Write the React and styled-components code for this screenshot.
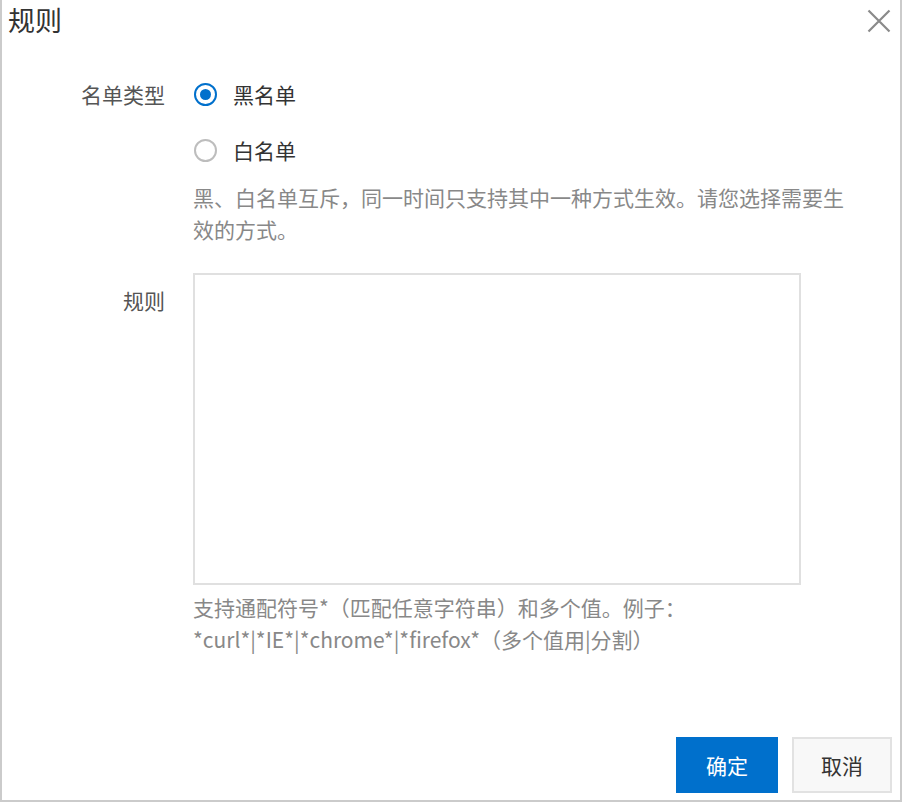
import React, { useState } from "react";
import styled, { createGlobalStyle } from "styled-components";

const Global = createGlobalStyle`
  html, body { margin: 0; padding: 0; background: #fff; }
  body { font-family: "Noto Sans CJK SC", "Noto Sans", sans-serif; }
  * { box-sizing: border-box; }
`;

const Dialog = styled.div`
  width: 902px;
  height: 802px;
  border: 2px solid #cbcbcb;
  border-top: none;
  background: #fff;
  display: flex;
  flex-direction: column;
`;

const Header = styled.div`
  height: 40px;
  display: flex;
  align-items: center;
  justify-content: space-between;
  padding: 0 9px 0 6px;
`;

const Title = styled.div`
  font-size: 27px;
  line-height: 40px;
  color: #333;
`;

const CloseButton = styled.button`
  border: none;
  background: none;
  padding: 0;
  width: 24px;
  height: 24px;
  display: flex;
  cursor: pointer;
  margin-top: 2px;
`;

const Body = styled.div`
  padding-top: 38px;
  display: grid;
  grid-template-columns: 163px 1fr;
  column-gap: 28px;
  row-gap: 28px;
`;

const Label = styled.div`
  text-align: right;
  font-size: 21px;
  line-height: 32px;
  color: #555;
  padding-top: ${(p) => p.$offset || 0}px;
`;

const Field = styled.div`
  display: flex;
  flex-direction: column;
`;

const RadioGroup = styled.div`
  display: flex;
  flex-direction: column;
  gap: 24px;
`;

const RadioItem = styled.label`
  display: flex;
  align-items: center;
  gap: 16px;
  height: 32px;
  font-size: 21px;
  line-height: 32px;
  color: #333;
  cursor: pointer;
`;

const Circle = styled.span`
  width: 23px;
  height: 23px;
  margin-left: 1px;
  border-radius: 50%;
  border: 2px solid ${(p) => (p.$checked ? "#0070cc" : "#bdbdbd")};
  display: flex;
  align-items: center;
  justify-content: center;
  flex: none;
  &::after {
    content: "";
    width: 11px;
    height: 11px;
    border-radius: 50%;
    background: ${(p) => (p.$checked ? "#0070cc" : "transparent")};
  }
`;

const Help = styled.div`
  font-size: 21px;
  line-height: 32px;
  color: #888;
  max-width: ${(p) => p.$width || 660}px;
  margin-top: ${(p) => p.$top || 0}px;
`;

const TextArea = styled.textarea`
  width: 608px;
  height: 312px;
  border: 2px solid #e0e0e0;
  resize: none;
  outline: none;
  font-family: inherit;
  font-size: 21px;
  padding: 8px 12px;
`;

const Footer = styled.div`
  margin-top: auto;
  display: flex;
  justify-content: flex-end;
  gap: 14px;
  padding: 0 8px 7px 0;
`;

const Button = styled.button`
  height: 56px;
  width: ${(p) => (p.$primary ? 102 : 100)}px;
  font-family: inherit;
  font-size: 21px;
  border: ${(p) => (p.$primary ? "none" : "2px solid #e2e2e2")};
  background: ${(p) => (p.$primary ? "#0070cc" : "#f8f8f8")};
  color: ${(p) => (p.$primary ? "#fff" : "#333")};
  cursor: pointer;
`;

export default function App() {
  const [type, setType] = useState("black");
  return (
    <>
      <Global />
      <Dialog>
        <Header>
          <Title>规则</Title>
          <CloseButton aria-label="close">
            <svg width="24" height="24" viewBox="0 0 24 24">
              <path d="M1.5 1.5 L22.5 22.5 M22.5 1.5 L1.5 22.5" stroke="#8a8a8a" strokeWidth="2.2" fill="none" />
            </svg>
          </CloseButton>
        </Header>
        <Body>
          <Label>名单类型</Label>
          <Field>
            <RadioGroup>
              <RadioItem onClick={() => setType("black")}>
                <Circle $checked={type === "black"} />
                黑名单
              </RadioItem>
              <RadioItem onClick={() => setType("white")}>
                <Circle $checked={type === "white"} />
                白名单
              </RadioItem>
            </RadioGroup>
            <Help $top={15}>
              黑、白名单互斥，同一时间只支持其中一种方式生效。请您选择需要生效的方式。
            </Help>
          </Field>
          <Label $offset={11}>规则</Label>
          <Field>
            <TextArea />
            <Help $top={6} $width={620}>
              支持通配符号*（匹配任意字符串）和多个值。例子：
              <br />
              *curl*|*IE*|*chrome*|*firefox*（多个值用|分割）
            </Help>
          </Field>
        </Body>
        <Footer>
          <Button $primary>确定</Button>
          <Button>取消</Button>
        </Footer>
      </Dialog>
    </>
  );
}
